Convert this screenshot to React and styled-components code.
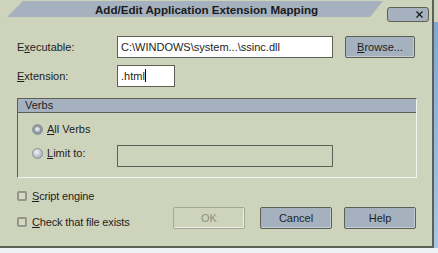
import React from 'react';
import styled, { createGlobalStyle } from 'styled-components';

const GlobalStyle = createGlobalStyle`
  html, body {
    margin: 0;
    padding: 0;
  }

  body {
    background: #f1f2f4;
    font-family: "Liberation Sans", Arial, sans-serif;
    font-size: 11px;
    color: #1e1e1e;
  }
`;

const Screen = styled.div`
  width: 438px;
  height: 253px;
  display: flex;
  flex-direction: column;
  overflow: hidden;
  background: #f1f2f4;
`;

const Upper = styled.div`
  display: flex;
  height: 248px;
`;

const Dialog = styled.div`
  width: 434px;
  height: 248px;
  box-sizing: border-box;
  background: #ced3bb;
  border-right: 2px solid #5d6054;
  border-bottom: 2px solid #5d6054;
  display: flex;
  flex-direction: column;
`;

const DesktopEdge = styled.div`
  flex: 1;
  background: linear-gradient(#ced3bb 0 22px, #7ea8d6 22px, #a8c6e4);
`;

const DesktopBottom = styled.div`
  flex: 1;
  background: #eef0f3;
`;

const TitleRow = styled.div`
  display: flex;
  align-items: flex-start;
  height: 25px;
`;

const TitleTab = styled.div`
  margin: 1px 0 0 7px;
  width: 376px;
  height: 16px;
  box-sizing: border-box;
  padding-left: 88px;
  background: #a5b1be;
  clip-path: polygon(16px 0, 100% 0, calc(100% - 13px) 100%, 0 100%);
  font-weight: bold;
  font-size: 11.6px;
  line-height: 17px;
  color: #1a1a1a;
  white-space: nowrap;
`;

const CloseButton = styled.div`
  margin: 7px 0 0 4px;
  width: 42px;
  height: 15px;
  box-sizing: border-box;
  border: 1px solid #5d6054;
  border-radius: 3px;
  background: #a5b1be;
  display: flex;
  justify-content: flex-end;
  align-items: center;
  padding-right: 5px;
`;

const Body = styled.div`
  padding: 11px 0 0 17px;
`;

const FieldRow = styled.div`
  display: flex;
  align-items: center;
  height: 22px;
  margin-top: ${(p) => p.$top || 0}px;
`;

const Label = styled.div`
  width: 100px;
`;

const TextBox = styled.div`
  width: ${(p) => p.$width}px;
  height: 22px;
  box-sizing: border-box;
  border: 1px solid #5d6054;
  background: ${(p) => (p.$disabled ? 'transparent' : '#fff')};
  padding-left: 3px;
  line-height: 20px;
  white-space: nowrap;
  overflow: hidden;
`;

const Caret = styled.span`
  display: inline-block;
  width: 1px;
  height: 13px;
  background: #000;
  vertical-align: -2px;
`;

const Button = styled.div`
  width: ${(p) => p.$width || 72}px;
  height: 22px;
  margin-left: ${(p) => p.$gap || 0}px;
  box-sizing: border-box;
  border: 1px solid ${(p) => (p.$disabled ? '#a3a793' : '#5d6054')};
  border-radius: 2px;
  background: ${(p) => (p.$disabled ? '#ced3bb' : '#a5b1be')};
  box-shadow: inset -1px -1px 0 ${(p) => (p.$disabled ? '#eef0e4' : '#c3ccd5')};
  color: ${(p) => (p.$disabled ? '#8d907f' : '#1e1e1e')};
  display: flex;
  align-items: center;
  justify-content: center;
`;

const Group = styled.div`
  margin-top: 11px;
  width: 400px;
  height: 80px;
  box-sizing: border-box;
  border-top: 1px solid #5d6054;
  border-left: 1px solid #5d6054;
  border-right: 1px solid #f2f3ea;
  border-bottom: 1px solid #f2f3ea;
`;

const GroupHeader = styled.div`
  height: 13px;
  line-height: 13px;
  padding-left: 7px;
  background: #a5b1be;
  border-bottom: 1px solid #5d6054;
`;

const GroupBody = styled.div`
  padding: 8px 0 0 14px;
`;

const OptionRow = styled.div`
  display: flex;
  align-items: flex-start;
  margin-top: ${(p) => p.$top || 0}px;
`;

const Option = styled.div`
  display: flex;
  align-items: center;
  gap: 4px;
  height: 16px;
  width: ${(p) => (p.$width ? `${p.$width}px` : 'auto')};
`;

const Radio = styled.span`
  width: 11px;
  height: 11px;
  box-sizing: border-box;
  border-radius: 50%;
  border: 1px solid #8a9096;
  background: radial-gradient(circle at 40% 35%, #eef1f5, #a6b2bf 75%);
  box-shadow: ${(p) => (p.$checked ? 'inset 0 0 0 2px #8d959c' : 'none')};
`;

const BottomArea = styled.div`
  display: flex;
  margin-top: 10px;
`;

const CheckColumn = styled.div`
  width: 156px;
  display: flex;
  flex-direction: column;
  gap: 10px;
`;

const CheckRow = styled.div`
  display: flex;
  align-items: center;
  gap: 5px;
  height: 16px;
  letter-spacing: -0.15px;
`;

const CheckBox = styled.span`
  width: 10px;
  height: 10px;
  box-sizing: border-box;
  border: 2px solid #929789;
  border-radius: 2px;
  background: #d4d8c4;
`;

const ButtonRow = styled.div`
  display: flex;
  margin-top: 19px;
`;

const CloseIcon = () => (
  <svg width="7" height="7" viewBox="0 0 7 7">
    <path d="M0.5 0.5 L6.5 6.5 M6.5 0.5 L0.5 6.5" stroke="#111" strokeWidth="1.1" />
  </svg>
);

const App = () => {
  return (
    <>
      <GlobalStyle />
      <Screen>
        <Upper>
          <Dialog>
            <TitleRow>
              <TitleTab>Add/Edit Application Extension Mapping</TitleTab>
              <CloseButton>
                <CloseIcon />
              </CloseButton>
            </TitleRow>
            <Body>
              <FieldRow>
                <Label>
                  E<u>x</u>ecutable:
                </Label>
                <TextBox $width={216}>C:\WINDOWS\system...\ssinc.dll</TextBox>
                <Button $width={70} $gap={12}>
                  <span>
                    <u>B</u>rowse...
                  </span>
                </Button>
              </FieldRow>
              <FieldRow $top={7}>
                <Label>
                  <u>E</u>xtension:
                </Label>
                <TextBox $width={58}>
                  .html
                  <Caret />
                </TextBox>
              </FieldRow>
              <Group>
                <GroupHeader>Verbs</GroupHeader>
                <GroupBody>
                  <OptionRow>
                    <Option>
                      <Radio $checked />
                      <span>
                        <u>A</u>ll Verbs
                      </span>
                    </Option>
                  </OptionRow>
                  <OptionRow $top={8}>
                    <Option $width={85}>
                      <Radio />
                      <span>
                        <u>L</u>imit to:
                      </span>
                    </Option>
                    <TextBox $width={216} $disabled />
                  </OptionRow>
                </GroupBody>
              </Group>
              <BottomArea>
                <CheckColumn>
                  <CheckRow>
                    <CheckBox />
                    <span>
                      <u>S</u>cript engine
                    </span>
                  </CheckRow>
                  <CheckRow>
                    <CheckBox />
                    <span>
                      <u>C</u>heck that file exists
                    </span>
                  </CheckRow>
                </CheckColumn>
                <ButtonRow>
                  <Button $disabled>OK</Button>
                  <Button $gap={15}>Cancel</Button>
                  <Button $gap={12}>Help</Button>
                </ButtonRow>
              </BottomArea>
            </Body>
          </Dialog>
          <DesktopEdge />
        </Upper>
        <DesktopBottom />
      </Screen>
    </>
  );
};

export default App;
